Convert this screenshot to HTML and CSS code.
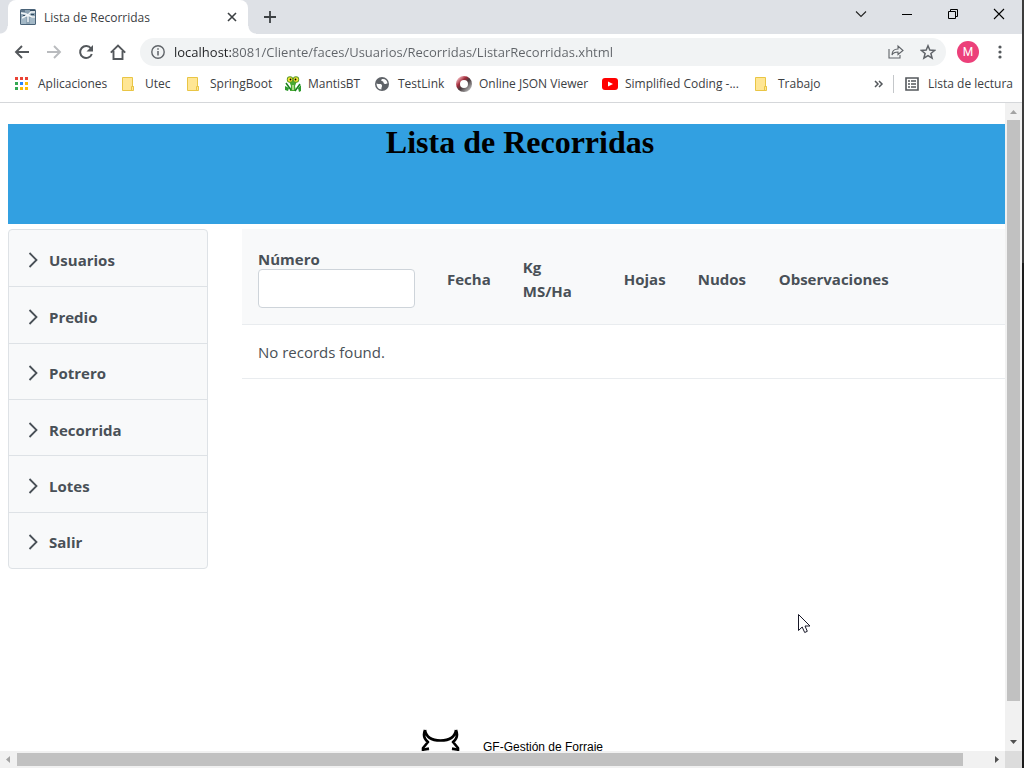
FILE: index.html
```html
<!DOCTYPE html>
<html lang="es">
<head>
<meta charset="utf-8">
<title>Lista de Recorridas</title>
<link rel="stylesheet" href="styles.css">
</head>
<body>
<div class="window">
  <header class="tabstrip">
    <div class="tab">
      <svg class="favicon" width="16" height="16" viewBox="0 0 16 16"><rect width="16" height="16" rx="1.500" fill="#4a6378"/><rect x="1" y="1" width="14" height="14" fill="#8da3b3"/><path d="M1 9h5v6H1zM10 9h5v6h-5z" fill="#a3b8c6"/><path d="M1 4l5 1 2 1 3-3h4M8 6L2 9M8 6l4 2h3M8 6v7" fill="none" stroke="#f2f6f8" stroke-width="1.400"/><path d="M1 2h4M10 1.500h5M3 6.500h2M11 5.500h3" stroke="#344d62" stroke-width="1"/></svg>
      <span class="tab-title">Lista de Recorridas</span>
      <button class="icon-button" aria-label="Cerrar pestaña"><svg width="10" height="10" viewBox="0 0 10 10"><path d="M1 1l8 8M9 1L1 9" stroke="#3c4043" stroke-width="1.600"/></svg></button>
    </div>
    <button class="icon-button new-tab" aria-label="Nueva pestaña"><svg width="12" height="12" viewBox="0 0 12 12"><path d="M6 0v12M0 6h12" stroke="#3c4043" stroke-width="1.800"/></svg></button>
    <div class="window-controls">
      <button class="icon-button" aria-label="Buscar pestañas"><svg width="12" height="12" viewBox="0 0 12 12"><path d="M1 3.500l5 5 5-5" fill="none" stroke="#222" stroke-width="1.100"/></svg></button>
      <button class="icon-button" aria-label="Minimizar"><svg width="12" height="12" viewBox="0 0 12 12"><path d="M1 6.500h10" stroke="#000"/></svg></button>
      <button class="icon-button" aria-label="Restaurar"><svg width="12" height="12" viewBox="0 0 12 12"><path d="M1.500 3.500h7v7h-7zM3.500 3.500v-2h7v7h-2" fill="none" stroke="#000"/></svg></button>
      <button class="icon-button" aria-label="Cerrar"><svg width="12" height="12" viewBox="0 0 12 12"><path d="M1 1l10 10M11 1L1 11" stroke="#000" stroke-width="1.100"/></svg></button>
    </div>
  </header>

  <div class="toolbar">
    <button class="icon-button nav" aria-label="Atrás"><svg width="16" height="16" viewBox="0 0 16 16"><path d="M15 8H2M8 2L2 8l6 6" fill="none" stroke="#54585c" stroke-width="1.900"/></svg></button>
    <button class="icon-button nav" aria-label="Adelante" disabled><svg width="16" height="16" viewBox="0 0 16 16"><path d="M1 8h13M8 2l6 6-6 6" fill="none" stroke="#b9bbbe" stroke-width="1.900"/></svg></button>
    <button class="icon-button nav" aria-label="Recargar"><svg width="16" height="16" viewBox="0 0 16 16"><path d="M13 4.500A6 6 0 1 0 13.800 10" fill="none" stroke="#54585c" stroke-width="2"/><path d="M15 1v6.500H8.500z" fill="#54585c"/></svg></button>
    <button class="icon-button nav" aria-label="Inicio"><svg width="16" height="16" viewBox="0 0 16 16"><path d="M0.800 8.700L8 1.500l7.200 7.200M3.500 7v8h9V7" fill="none" stroke="#54585c" stroke-width="1.900"/></svg></button>
    <div class="address">
      <svg width="14" height="14" viewBox="0 0 14 14"><circle cx="7" cy="7" r="6.200" fill="none" stroke="#5f6368" stroke-width="1.400"/><path d="M7 6v4.500M7 3.300v1.500" stroke="#5f6368" stroke-width="1.500"/></svg>
      <input class="url" type="text" aria-label="Dirección" value="localhost:8081/Cliente/faces/Usuarios/Recorridas/ListarRecorridas.xhtml">
      <button class="icon-button" aria-label="Compartir"><svg width="16" height="16" viewBox="0 0 16 16"><path d="M1 5v9h11v-3M4 11c0-4 2-6 6-6V2l5 4.500-5 4V8C7 8 5 9 4 11z" fill="none" stroke="#5f6368" stroke-width="1.100"/></svg></button>
      <button class="icon-button star" aria-label="Favorito"><svg width="16" height="16" viewBox="0 0 16 16"><path d="M8 1.800l1.800 4.300 4.700.4-3.600 3 1.200 4.600L8 11.600l-4.100 2.500 1.200-4.600-3.600-3 4.700-.4z" fill="none" stroke="#5f6368" stroke-width="1.500"/></svg></button>
    </div>
    <button class="avatar" aria-label="Perfil">M</button>
    <button class="icon-button menu" aria-label="Menú"><svg width="4" height="14" viewBox="0 0 4 14"><g fill="#54585c"><circle cx="2" cy="2" r="1.600"/><circle cx="2" cy="7" r="1.600"/><circle cx="2" cy="12" r="1.600"/></g></svg></button>
  </div>

  <nav class="bookmarks">
    <a href="#"><svg viewBox="0 0 18 18"><path d="M1 2h3v3H1zM6 2h3v3H6zM11 2h3v3h-3z" fill="#ea4335"/><path d="M1 7h3v3H1zM1 12h3v3H1z" fill="#34a853"/><path d="M6 7h3v3H6z" fill="#2684fc"/><path d="M11 7h3v3h-3zM6 12h3v3H6zM11 12h3v3h-3z" fill="#fbbc04"/></svg>Aplicaciones</a>
    <a href="#"><svg viewBox="0 0 18 18"><path d="M1.500 2.500h10v9h1v4h-11z" fill="#ffe694" stroke="#e9c545"/><path d="M10.500 15v-3.500h2" fill="none" stroke="#e9c545"/></svg>Utec</a>
    <a href="#"><svg viewBox="0 0 18 18"><path d="M1.500 2.500h10v9h1v4h-11z" fill="#ffe694" stroke="#e9c545"/><path d="M10.500 15v-3.500h2" fill="none" stroke="#e9c545"/></svg>SpringBoot</a>
    <a href="#"><svg viewBox="0 0 18 18"><path d="M5 6h8l-2 5 1 5H6l1-5z" fill="#46a832"/><path d="M1 11l4 2-1 3-3-1zM17 10l-3 3 1 4 2-1z" fill="#2d9a2d"/><path d="M2 8l5 7M16 9l-5 7" fill="none" stroke="#16801c" stroke-width="1.500"/><path d="M9 10v5" stroke="#c9ec9c" stroke-width="1.500"/><circle cx="6" cy="4.500" r="3.200" fill="#5a9a22"/><circle cx="12" cy="4.500" r="3.200" fill="#5a9a22"/><circle cx="6" cy="4.500" r="2.300" fill="#f6e533"/><circle cx="12" cy="4.500" r="2.300" fill="#f6e533"/><circle cx="6.500" cy="4.500" r=".9"/><circle cx="11.500" cy="4.500" r=".9"/></svg>MantisBT</a>
    <a href="#"><svg viewBox="0 0 18 18"><circle cx="8" cy="9" r="7" fill="#5f6368"/><path d="M2.500 8.500c2 1 5-.5 5.500 2 .3 1.500-1 2-.500 4-3 0-5-3-5-6zM9 4c-2 0-2.500 2-.5 2.200 1.500.3.500 2.300 2.500 2.800 1.200.4 1.500-1 2.500-.5C13.500 6 11.500 4 9 4z" fill="#fff"/></svg>TestLink</a>
    <a href="#"><svg viewBox="0 0 18 18"><defs><linearGradient id="ring" x1="0" y1="0" x2="1" y2="1"><stop offset="0" stop-color="#f2b7bd"/><stop offset=".3" stop-color="#a32c3b"/><stop offset=".55" stop-color="#473c3f"/><stop offset="1" stop-color="#b9b9b9"/></linearGradient></defs><circle cx="9" cy="9" r="6" fill="#fff" stroke="url(#ring)" stroke-width="4"/></svg>Online JSON Viewer</a>
    <a href="#"><svg viewBox="0 0 18 18"><rect x="1" y="3" width="16" height="12" rx="3" fill="#f00"/><path d="M7 6.500v5l5-2.500z" fill="#fff"/></svg>Simplified Coding -...</a>
    <a href="#"><svg viewBox="0 0 18 18"><path d="M1.500 2.500h10v9h1v4h-11z" fill="#ffe694" stroke="#e9c545"/><path d="M10.500 15v-3.500h2" fill="none" stroke="#e9c545"/></svg>Trabajo</a>
    <button class="icon-button" aria-label="Más marcadores"><svg class="more" viewBox="0 0 10 10"><path d="M1 2l3 3-3 3M5 2l3 3-3 3" fill="none" stroke="#54585c" stroke-width="1.500"/></svg></button>
    <a class="reading" href="#"><svg viewBox="0 0 18 18"><path d="M2 3h12v12H2z" fill="none" stroke="#54585c" stroke-width="1.600"/><path d="M4 6h2M4 9h2M4 12h2M7 6h5M7 9h5M7 12h5" stroke="#54585c" stroke-width="1.600"/></svg>Lista de lectura</a>
  </nav>

  <div class="viewport">
    <div class="page">
      <div class="document">
        <h1 class="banner">Lista de Recorridas</h1>
        <main class="content">
          <nav class="side-menu">
            <a href="#"><svg width="10" height="16" viewBox="0 0 10 16"><path d="M1.500 1l7 7-7 7" fill="none" stroke="#495057" stroke-width="1.800"/></svg>Usuarios</a>
            <a href="#"><svg width="10" height="16" viewBox="0 0 10 16"><path d="M1.500 1l7 7-7 7" fill="none" stroke="#495057" stroke-width="1.800"/></svg>Predio</a>
            <a href="#"><svg width="10" height="16" viewBox="0 0 10 16"><path d="M1.500 1l7 7-7 7" fill="none" stroke="#495057" stroke-width="1.800"/></svg>Potrero</a>
            <a href="#"><svg width="10" height="16" viewBox="0 0 10 16"><path d="M1.500 1l7 7-7 7" fill="none" stroke="#495057" stroke-width="1.800"/></svg>Recorrida</a>
            <a href="#"><svg width="10" height="16" viewBox="0 0 10 16"><path d="M1.500 1l7 7-7 7" fill="none" stroke="#495057" stroke-width="1.800"/></svg>Lotes</a>
            <a href="#"><svg width="10" height="16" viewBox="0 0 10 16"><path d="M1.500 1l7 7-7 7" fill="none" stroke="#495057" stroke-width="1.800"/></svg>Salir</a>
          </nav>
          <table class="records">
            <colgroup><col class="c-number"><col class="c-date"><col class="c-kg"><col class="c-leaves"><col class="c-nodes"><col></colgroup>
            <thead>
              <tr>
                <th scope="col"><label for="numero">Número</label><input id="numero" type="text"></th>
                <th scope="col">Fecha</th>
                <th scope="col">Kg MS/Ha</th>
                <th scope="col">Hojas</th>
                <th scope="col">Nudos</th>
                <th scope="col">Observaciones</th>
              </tr>
            </thead>
            <tbody><tr><td colspan="6">No records found.</td></tr></tbody>
          </table>
        </main>
        <footer class="page-footer">
          <svg width="40" height="40" viewBox="0 0 40 40"><path d="M5 2C3 7 4 11 8 14L3 20v4h6M36 2c2 5 1 9-3 12l5 6v4h-6M5 2c1 7 7 10.500 15.500 10.500S35 9 36 2" fill="none" stroke="#000" stroke-width="2.600" stroke-linejoin="round"/><path d="M4 21.500l5-1M37 21.500l-5-1" stroke="#000" stroke-width="2.500"/></svg>
          <span>GF-Gestión de Forraje</span>
        </footer>
      </div>
    </div>
    <div class="scroll-y"><svg width="17" height="17" viewBox="0 0 17 17"><path d="M5 11l3.500-4 3.500 4z" fill="#a3a3a3"/></svg><i class="thumb-y"></i><i class="rest-y"></i><svg width="17" height="17" viewBox="0 0 17 17"><path d="M5 6l3.500 4L12 6z" fill="#505050"/></svg></div>
    <div class="scroll-x"><svg width="17" height="17" viewBox="0 0 17 17"><path d="M10 5L6 8.500l4 3.500z" fill="#a3a3a3"/></svg><i class="thumb-x"></i><i class="rest-x"></i><svg width="17" height="17" viewBox="0 0 17 17"><path d="M7 5l4 3.500L7 12z" fill="#505050"/></svg></div>
    <div class="corner"></div>
    <svg class="pointer" width="13" height="20" viewBox="0 0 13 20"><path d="M.5 .5v16l3.700-3.500 2.500 5.500 2.600-1.200L7 12h5z" fill="#fff" stroke="#181828"/></svg>
  </div>
</div>
</body>
</html>
```
FILE: styles.css
```css
* { box-sizing: border-box; }
html, body { height: 100%; }
body {
  margin: 0;
  padding-right: 2px;
  background: linear-gradient(#3c3c3c 263px, #1b1b1b 263px);
  font-family: "Open Sans", "Noto Sans", sans-serif;
  font-size: 12px;
  color: #3c4043;
}
svg { display: block; flex: none; }
a { color: inherit; text-decoration: none; }
.window {
  display: flex;
  flex-direction: column;
  height: 100%;
  overflow: hidden;
  background: #fff;
}
.icon-button {
  display: grid;
  place-items: center;
  padding: 0;
  border: 0;
  background: none;
}

.tabstrip {
  display: flex;
  align-items: stretch;
  height: 34px;
  padding-left: 8px;
  background: #dee1e6;
}
.tab {
  position: relative;
  display: flex;
  align-items: center;
  gap: 8px;
  width: 240px;
  padding: 0 11px 0 12px;
  border-radius: 8px 8px 0 0;
  background: #fff;
}
.tab::before, .tab::after {
  position: absolute;
  bottom: 0;
  width: 8px;
  height: 8px;
  content: "";
}
.tab::before {
  right: 100%;
  background: radial-gradient(circle at 0 0, transparent 7px, #fff 8px);
}
.tab::after {
  left: 100%;
  background: radial-gradient(circle at 100% 0, transparent 7px, #fff 8px);
}
.tab-title { flex: 1; font-size: 12px; }
.new-tab { width: 44px; }
.window-controls { display: flex; margin-left: auto; padding-bottom: 6px; }
.window-controls .icon-button { width: 46px; }

.toolbar {
  display: flex;
  align-items: center;
  height: 36px;
  padding: 0 12px 0 6px;
}
.nav { width: 32px; height: 28px; }
.address {
  display: flex;
  flex: 1;
  align-items: center;
  height: 28px;
  margin: 0 11px 0 6px;
  padding: 0 10px 0 11px;
  border-radius: 14px;
  background: #f1f3f4;
}
.url {
  flex: 1;
  min-width: 0;
  margin-left: 9px;
  padding: 0;
  border: 0;
  outline: 0;
  background: linear-gradient(to right, #202124 57px, #5f6368 57px);
  background-clip: text;
  color: transparent;
  font: 13px "Open Sans", "Noto Sans", sans-serif;
}
.star { margin-left: 16px; }
.avatar {
  width: 22px;
  height: 22px;
  padding: 0;
  border: 0;
  border-radius: 50%;
  background: #ec407a;
  color: #fff;
  font: 12px Roboto, sans-serif;
}
.menu { width: 20px; margin-left: 11px; }

.bookmarks {
  display: grid;
  grid-template-columns: 107px 65px 98px 90px 81px 146px 153px 1fr 28px 129px;
  align-items: center;
  height: 33px;
  padding: 0 0 5px 14px;
  border-bottom: 1px solid #d5d7da;
  white-space: nowrap;
}
.bookmarks a { display: flex; align-items: center; gap: 6px; }
.bookmarks svg { width: 18px; height: 18px; }
.bookmarks .more { width: 10px; height: 10px; }
.bookmarks .reading { padding-left: 10px; border-left: 1px solid #c4c7ca; }

.viewport {
  position: relative;
  display: grid;
  flex: 1;
  grid-template: minmax(0, 1fr) 17px / minmax(0, 1fr) 17px;
  min-height: 0;
}
.page { overflow: hidden; }
.document {
  display: flex;
  flex-direction: column;
  height: 100%;
  margin-right: -27px;
  padding: 21px 0 0 8px;
}
.banner {
  min-height: 100px;
  margin: 0;
  background: #32a0e1;
  color: #000;
  font: bold 32px/37px "Liberation Serif", serif;
  text-align: center;
}
.content {
  display: flex;
  flex: 1;
  align-items: flex-start;
  gap: 34px;
  padding-top: 5px;
  color: #495057;
}
.side-menu {
  display: grid;
  grid-auto-rows: 1fr;
  width: 200px;
  min-height: 340px;
  border: 1px solid #dee2e6;
  border-radius: 4px;
  background: #f8f9fa;
  font-size: 15px;
  font-weight: 700;
}
.side-menu a {
  display: flex;
  align-items: center;
  gap: 11px;
  padding: 4px 19px 0;
}
.side-menu a + a { border-top: 1px solid #dee2e6; }
.records {
  flex: 1;
  table-layout: fixed;
  border-collapse: collapse;
  font-size: 15px;
  line-height: 24px;
  text-align: left;
}
.c-number { width: 189px; }
.c-date { width: 75px; }
.c-kg { width: 101px; }
.c-leaves { width: 74px; }
.c-nodes { width: 81px; }
.records th {
  padding: 18px 16px 14px;
  border-bottom: 1px solid #e9ecef;
  background: #f8f9fa;
}
.records th:first-child { padding: 20px 16px 16px; }
.records label { display: block; line-height: 20px; }
.records input {
  display: block;
  width: 157px;
  height: 39px;
  border: 1px solid #ced4da;
  border-radius: 4px;
  background: #fff;
}
.records td { padding: 15px 16px 14px; border-bottom: 1px solid #e9ecef; }
.page-footer {
  display: flex;
  gap: 23px;
  height: 23px;
  padding-left: 412px;
  color: #000;
  font: 12px/38px "Liberation Sans", sans-serif;
}

.scroll-y, .scroll-x { display: flex; background: #f1f1f1; }
.scroll-y { flex-direction: column; }
.thumb-y { flex: 581; margin: 0 2px; background: #c1c1c1; }
.rest-y { flex: 33; }
.thumb-x { flex: 946; margin: 2px 0; background: #c1c1c1; }
.rest-x { flex: 25; }
.corner { background: #dcdcdc; }
.pointer { position: absolute; left: 798px; top: 511px; }
```
